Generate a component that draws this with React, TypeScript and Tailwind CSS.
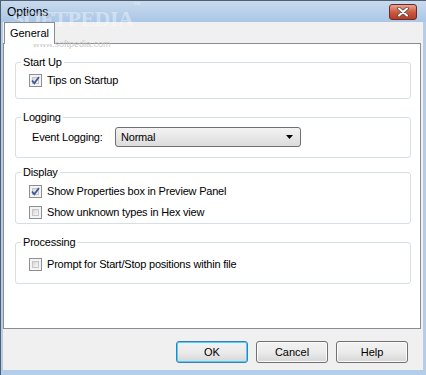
import React from 'react';

const font = { fontFamily: '"Liberation Sans", Arial, sans-serif' };

const CheckBox: React.FC<{ checked?: boolean }> = ({ checked }) => (
  <span className="relative w-[13px] h-[13px] shrink-0 border border-[#8e8f8f] bg-[#f4f4f4] flex items-center justify-center">
    <span className="absolute inset-[2px] border border-[#c6c6c6] bg-gradient-to-br from-[#d8d8d8] to-[#f6f6f6]" />
    {checked && (
      <svg width="11" height="11" viewBox="0 0 11 11" className="relative">
        <path d="M2 5.5 L4.3 8.2 L9 2" fill="none" stroke="#3d5a9a" strokeWidth="1.8" />
      </svg>
    )}
  </span>
);

const CheckRow: React.FC<{ checked?: boolean; label: string }> = ({ checked, label }) => (
  <div className="flex items-center h-[13px] pl-[13px] gap-[5px]">
    <CheckBox checked={checked} />
    <span className="text-[11px] tracking-[-0.2px] text-black leading-none whitespace-nowrap">{label}</span>
  </div>
);

const Group: React.FC<{ title: string; className: string; children: React.ReactNode }> = ({
  title,
  className,
  children,
}) => (
  <div className={`relative ml-[11px] mr-[9px] border border-[#d5dfe5] rounded-[3px] ${className}`}>
    <span className="absolute -top-[7px] left-[5px] bg-white px-[2px] text-[11px] tracking-[-0.2px] leading-[13px] text-black">
      {title}
    </span>
    {children}
  </div>
);

const Button: React.FC<{ label: string; primary?: boolean }> = ({ label, primary }) => (
  <div
    className={`w-[72px] h-[22px] rounded-[3px] border flex items-center justify-center text-[11px] text-black bg-gradient-to-b from-[#f2f2f2] via-[#ebebeb] to-[#d6d6d6] ${
      primary ? 'border-[#3c7fb1] shadow-[inset_0_0_0_1px_#48d2fd]' : 'border-[#707070] shadow-[inset_0_0_0_1px_#fcfcfc]'
    }`}
  >
    {label}
  </div>
);

export default function App() {
  return (
    <div style={font} className="relative w-[426px] h-[375px] overflow-hidden bg-[#b4cde8] border-l border-t border-[#51606f] flex flex-col">
      {/* title bar */}
      <div className="h-[21px] flex items-center px-[6px] bg-gradient-to-b from-[#c8daee] to-[#aac7e6]">
        <span className="text-[12px] text-black">Options</span>
        <div className="ml-auto mr-[3px] w-[28px] h-[16px] rounded-[3px] border border-[#6b2a22] bg-gradient-to-b from-[#e8a493] via-[#cf5a40] to-[#b83a22] flex items-center justify-center">
          <svg width="12" height="10" viewBox="0 0 12 10">
            <path d="M2 1.5 L10 8.5 M10 1.5 L2 8.5" stroke="#4a4a4a" strokeWidth="3.6" strokeLinecap="round" />
            <path d="M2 1.5 L10 8.5 M10 1.5 L2 8.5" stroke="#ffffff" strokeWidth="2" strokeLinecap="round" />
          </svg>
        </div>
      </div>

      {/* client */}
      <div className="ml-[2px] mr-[3px] h-[348px] bg-[#f0f0f0] flex flex-col">
        <div className="h-[21px] flex items-end">
          <div className="relative z-10 ml-[1px] w-[51px] h-[22px] -mb-px bg-white border border-b-0 border-[#898c95] flex items-center justify-center text-[11px] text-black">
            General
          </div>
        </div>
        <div className="mr-[2px] h-[286px] bg-white border border-[#898c95] pt-[18px] flex flex-col">
          <Group title="Start Up" className="h-[37px] pt-[11px]">
            <CheckRow checked label="Tips on Startup" />
          </Group>
          <Group title="Logging" className="h-[41px] mt-[18px] pt-[9px]">
            <div className="flex items-center h-[20px] pl-[16px]">
              <span className="text-[11px] tracking-[-0.2px] text-black w-[83px]">Event Logging:</span>
              <div className="w-[186px] h-[20px] rounded-[3px] border border-[#707070] bg-gradient-to-b from-[#f3f3f3] to-[#dcdcdc] flex items-center pl-[5px] pr-[7px]">
                <span className="text-[11px] tracking-[-0.2px] text-black">Normal</span>
                <svg width="7" height="4" viewBox="0 0 7 4" className="ml-auto">
                  <path d="M0 0 H7 L3.5 4 Z" fill="#000" />
                </svg>
              </div>
            </div>
          </Group>
          <Group title="Display" className="h-[52px] mt-[14px] pt-[12px] flex flex-col gap-[8px]">
            <CheckRow checked label="Show Properties box in Preview Panel" />
            <CheckRow label="Show unknown types in Hex view" />
          </Group>
          <Group title="Processing" className="h-[42px] mt-[18px] pt-[15px]">
            <CheckRow label="Prompt for Start/Stop positions within file" />
          </Group>
        </div>
        <div className="flex-1 flex justify-end items-start pt-[12px] pr-[15px] gap-[8px]">
          <Button label="OK" primary />
          <Button label="Cancel" />
          <Button label="Help" />
        </div>
      </div>

      {/* watermark */}
      <span className="absolute left-[11px] top-[7px] text-[22px] font-bold leading-none tracking-[-0.5px] text-white/40 pointer-events-none" style={{ fontFamily: '"Liberation Serif", serif' }}>
        SOFTPEDIA<sup className="text-[7px] align-top">™</sup>
      </span>
      <span className="absolute left-[32px] top-[39px] text-[9px] leading-none text-[#c9c9c9] pointer-events-none">
        www.softpedia.com
      </span>
    </div>
  );
}
